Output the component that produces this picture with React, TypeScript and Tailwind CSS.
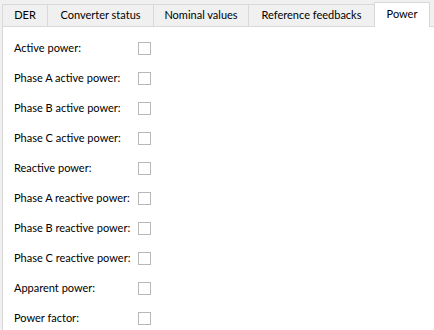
import React from "react";

const tabs = [
  { label: "DER", w: 46 },
  { label: "Converter status", w: 107 },
  { label: "Nominal values", w: 96 },
  { label: "Reference feedbacks", w: 127 },
];

const rows = [
  "Active power:",
  "Phase A active power:",
  "Phase B active power:",
  "Phase C active power:",
  "Reactive power:",
  "Phase A reactive power:",
  "Phase B reactive power:",
  "Phase C reactive power:",
  "Apparent power:",
  "Power factor:",
];

export default function App() {
  return (
    <div
      className="w-[434px] h-[330px] overflow-hidden bg-[#f0f0f0] pl-[2px] pt-[2px] text-[11px] text-black whitespace-nowrap"
      style={{ fontFamily: 'Lato, "Liberation Sans", sans-serif' }}
    >
      <div className="flex items-end h-[24px] relative z-10">
        {tabs.map((t, i) => (
          <div
            key={t.label}
            className={`h-[22px] flex items-center justify-center border border-b-0 border-[#d9d9d9] bg-[#f0f0f0] shrink-0 ${i > 0 ? "-ml-px" : ""}`}
            style={{ width: t.w }}
          >
            {t.label}
          </div>
        ))}
        <div className="h-[25px] w-[56px] -ml-px -mb-px flex items-center justify-center border border-b-0 border-[#d9d9d9] bg-white shrink-0 pb-[1px]">
          Power
        </div>
      </div>
      <div className="bg-white border border-[#d9d9d9] w-[440px] h-[320px] pt-[6px] pl-[11px]">
        {rows.map((r) => (
          <div key={r} className="h-[30px] flex items-center">
            <div className="w-[124px] shrink-0">{r}</div>
            <div className="w-[13px] h-[13px] border border-[#b8b8b8] bg-white" />
          </div>
        ))}
      </div>
    </div>
  );
}
